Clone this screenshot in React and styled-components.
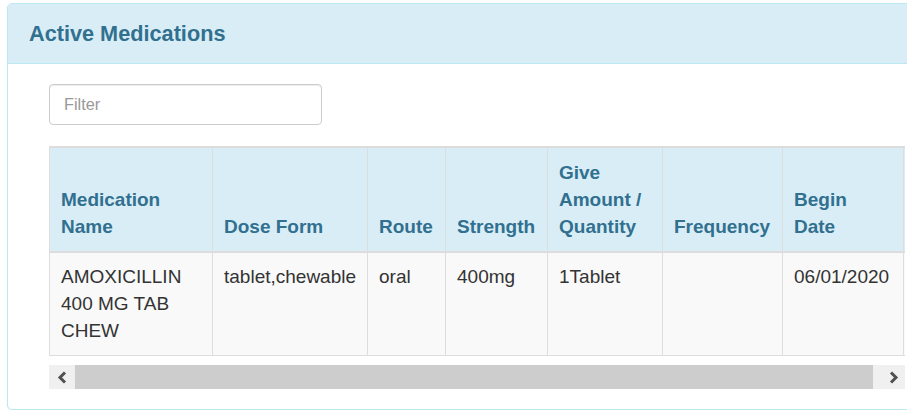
import React from 'react';
import styled, { createGlobalStyle } from 'styled-components';

const GlobalStyle = createGlobalStyle`
  html, body {
    margin: 0;
    padding: 0;
    overflow: hidden;
    background: #fff;
  }
  body {
    font-family: "Liberation Sans", Arial, Helvetica, sans-serif;
    color: #333;
  }
`;

const Page = styled.div`
  padding: 3px 0 0 7px;
`;

const Panel = styled.section`
  box-sizing: border-box;
  width: 940px;
  border: 1px solid #bce8f1;
  border-radius: 5px;
  background: #fff;
  box-shadow: 0 1px 2px rgba(0, 0, 0, 0.06);
`;

const PanelHeading = styled.header`
  display: flex;
  align-items: center;
  height: 59px;
  padding: 0 21px;
  background: #d9edf7;
  border-bottom: 1px solid #bce8f1;
  border-radius: 4px 4px 0 0;
`;

const PanelTitle = styled.h3`
  margin: 0;
  font-size: 21.7px;
  font-weight: bold;
  color: #31708f;
  line-height: 24px;
`;

const PanelBody = styled.div`
  padding: 20px 41px 20px 41px;
`;

const FilterInput = styled.input`
  box-sizing: border-box;
  display: block;
  width: 273px;
  height: 41px;
  padding: 0 14px;
  border: 1px solid #ccc;
  border-radius: 4px;
  font-family: inherit;
  font-size: 16.3px;
  color: #555;
  outline: none;
  box-shadow: inset 0 1px 1px rgba(0, 0, 0, 0.075);
  &::placeholder {
    color: #999;
  }
`;

const TableViewport = styled.div`
  width: 856px;
  margin-top: 21px;
  overflow: hidden;
`;

const Table = styled.table`
  border-collapse: collapse;
  table-layout: fixed;
  width: 964px;
  font-size: 19px;
  line-height: 27px;
  border-top: 2px solid #ddd;
`;

const Col = styled.col`
  width: ${p => p.$w}px;
`;

const HeadCell = styled.th`
  padding: 11px;
  text-align: left;
  vertical-align: bottom;
  font-weight: bold;
  color: #31708f;
  background: #d9edf7;
  border: 1px solid #ddd;
  border-bottom: 2px solid #ddd;
  border-top: 0;
`;

const Cell = styled.td`
  padding: 11px;
  padding-top: 10px;
  vertical-align: top;
  color: #333;
  background: #f9f9f9;
  border: 1px solid #ddd;
`;

const ScrollBar = styled.div`
  display: flex;
  width: 856px;
  height: 24px;
  margin-top: 9px;
  background: #f0f0f0;
`;

const ScrollButton = styled.div`
  flex: 0 0 ${p => p.$w}px;
  display: flex;
  align-items: center;
  justify-content: center;
  color: #505050;
  ${p => p.$end && 'margin-left: auto;'}
`;

const ScrollThumb = styled.div`
  flex: 0 0 798px;
  background: #cdcdcd;
`;

const Arrow = ({ dir }) => (
  <svg width="11" height="13" viewBox="0 0 11 13">
    <polyline
      points={dir === 'left' ? '8,1.5 3,6.5 8,11.5' : '3,1.5 8,6.5 3,11.5'}
      fill="none"
      stroke="currentColor"
      strokeWidth="3"
    />
  </svg>
);

const columns = [
  { label: 'Medication Name', w: 163 },
  { label: 'Dose Form', w: 155 },
  { label: 'Route', w: 78 },
  { label: 'Strength', w: 102 },
  { label: 'Give Amount / Quantity', w: 115 },
  { label: 'Frequency', w: 120 },
  { label: ['Begin', 'Date'], w: 121 },
  { label: '', w: 110 },
];

const medications = [
  {
    id: 1,
    cells: ['AMOXICILLIN 400 MG TAB CHEW', 'tablet,chewable', 'oral', '400mg', '1Tablet', '', '06/01/2020', ''],
  },
];

const Label = ({ text }) =>
  Array.isArray(text)
    ? text.map((t, i) => (
        <React.Fragment key={t}>
          {i > 0 && <br />}
          {t}
        </React.Fragment>
      ))
    : text;

export default function App() {
  return (
    <Page>
      <GlobalStyle />
      <Panel>
        <PanelHeading>
          <PanelTitle>Active Medications</PanelTitle>
        </PanelHeading>
        <PanelBody>
          <FilterInput placeholder="Filter" />
          <TableViewport>
            <Table>
              <colgroup>
                {columns.map((c, i) => (
                  <Col key={i} $w={c.w} />
                ))}
              </colgroup>
              <thead>
                <tr>
                  {columns.map((c, i) => (
                    <HeadCell key={i}>
                      <Label text={c.label} />
                    </HeadCell>
                  ))}
                </tr>
              </thead>
              <tbody>
                {medications.map(m => (
                  <tr key={m.id}>
                    {m.cells.map((v, i) => (
                      <Cell key={i}>{v}</Cell>
                    ))}
                  </tr>
                ))}
              </tbody>
            </Table>
          </TableViewport>
          <ScrollBar>
            <ScrollButton $w={26}>
              <Arrow dir="left" />
            </ScrollButton>
            <ScrollThumb />
            <ScrollButton $w={24} $end>
              <Arrow dir="right" />
            </ScrollButton>
          </ScrollBar>
        </PanelBody>
      </Panel>
    </Page>
  );
}
